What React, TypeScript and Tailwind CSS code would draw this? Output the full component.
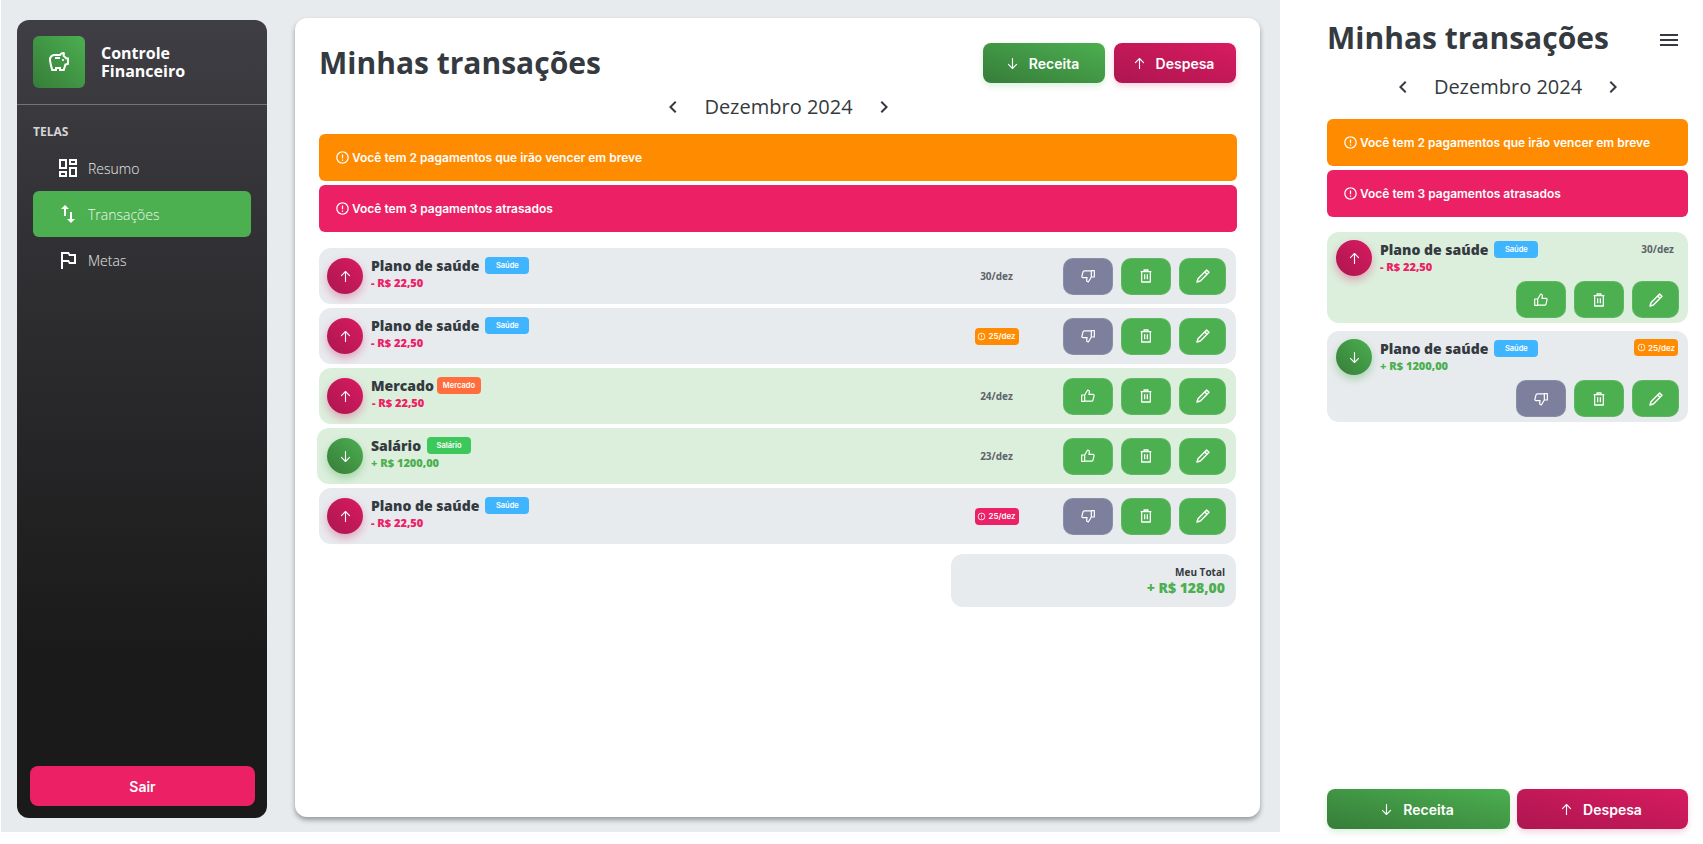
import React from "react";
import { MdOutlineDashboard, MdSwapVert, MdOutlinedFlag, MdOutlineSavings, MdOutlineErrorOutline, MdChevronLeft, MdChevronRight, MdMenu } from "react-icons/md";

const OPEN = "font-['Open_Sans',sans-serif]";
const INTER = "font-['Inter',sans-serif]";

function Arrow({ up, size = 18 }: { up: boolean; size?: number }) {
  return (
    <svg width={size} height={size} viewBox="0 0 24 24" fill="none" stroke="currentColor" strokeWidth="1.8" strokeLinecap="round" strokeLinejoin="round">
      {up ? <path d="M12 20V4M5.5 10.5 12 4l6.5 6.5" /> : <path d="M12 4v16M5.5 13.5 12 20l6.5-6.5" />}
    </svg>
  );
}

function Trash() {
  return (
    <svg width="16" height="16" viewBox="0 0 24 24" fill="none" stroke="currentColor" strokeWidth="1.9" strokeLinejoin="round">
      <path d="M4 5.5h16M9 5.5V3h6v2.5M5.5 5.5V21h13V5.5M10 9.5V17M14 9.5V17" />
    </svg>
  );
}

function Pencil() {
  return (
    <svg width="16" height="16" viewBox="0 0 24 24" fill="none" stroke="currentColor" strokeWidth="2.2" strokeLinejoin="round">
      <path d="M17.5 3 21 6.5 8 19.5 3 21l1.5-5zM14.5 6l3.5 3.5" />
    </svg>
  );
}

function Thumb({ up }: { up: boolean }) {
  return (
    <svg width="16" height="16" viewBox="0 0 24 24" fill="none" stroke="currentColor" strokeWidth="1.8" strokeLinejoin="round" style={up ? undefined : { transform: "rotate(180deg)" }}>
      <path d="M2.5 10.5h4.5V20H2.5zM7 10.5 11.5 3c1.7 0 2.8 1.2 2.5 3l-.6 3.5h6.1c1.2 0 1.9 1 1.6 2.1l-1.6 6.6c-.2.9-1 1.6-2 1.6H7" />
    </svg>
  );
}

const gradGreen = "bg-gradient-to-tr from-[#367d39] to-[#4caf50]";
const gradRed = "bg-gradient-to-tr from-[#ad1650] to-[#d81b60]";

function Badge({ label, color }: { label: string; color: string }) {
  return <span className={`${INTER} ${color} inline-flex h-[17px] w-[44px] items-center justify-center rounded-[4px] text-[7.5px] font-semibold text-white`}>{label}</span>;
}

function ActionBtn({ children, className }: { children: React.ReactNode; className: string }) {
  return <button className={`flex h-[37px] items-center justify-center rounded-[10px] border border-white/10 text-white ${className}`}>{children}</button>;
}

function Actions({ paid }: { paid: boolean }) {
  return (
    <div className="flex gap-2">
      <ActionBtn className={`w-[50px] ${paid ? "bg-[#4caf50]" : "bg-[#7d809c]"}`}>
        <Thumb up={paid} />
      </ActionBtn>
      <ActionBtn className="w-[50px] bg-[#4caf50]"><Trash /></ActionBtn>
      <ActionBtn className="w-[47px] bg-[#4caf50]"><Pencil /></ActionBtn>
    </div>
  );
}

function Circle({ up }: { up: boolean }) {
  return (
    <div className={`flex h-9 w-9 shrink-0 items-center justify-center rounded-full text-white ${up ? `${gradRed} shadow-[0_4px_8px_rgba(216,27,96,0.35)]` : `${gradGreen} shadow-[0_4px_8px_rgba(76,175,80,0.4)]`}`}>
      <Arrow up={up} size={15} />
    </div>
  );
}

function DateTag({ date, tone }: { date: string; tone?: string }) {
  if (!tone) return <span className={`${OPEN} text-[10px] font-bold leading-[19px] text-[#5d6369]`}>{date}</span>;
  return (
    <span className={`${INTER} ${tone} inline-flex h-[17px] w-[44px] items-center justify-center gap-[2px] rounded-[4px] text-[8px] font-semibold text-white`}>
      <MdOutlineErrorOutline size={9} />
      {date}
    </span>
  );
}

type Row = { title: string; tag: string; tagColor: string; up: boolean; amount: string; date: string; tone?: string; paid: boolean; wide?: boolean; tight?: boolean };

const rows: Row[] = [
  { title: "Plano de saúde", tag: "Saúde", tagColor: "bg-[#40b5ff]", up: true, amount: "- R$ 22,50", date: "30/dez", paid: false },
  { title: "Plano de saúde", tag: "Saúde", tagColor: "bg-[#40b5ff]", up: true, amount: "- R$ 22,50", date: "25/dez", tone: "bg-[#ff8c00]", paid: false },
  { title: "Mercado", tag: "Mercado", tagColor: "bg-[#ff6e3c]", up: true, amount: "- R$ 22,50", date: "24/dez", paid: true, tight: true },
  { title: "Salário", tag: "Salário", tagColor: "bg-[#3dc85c]", up: false, amount: "+ R$ 1200,00", date: "23/dez", paid: true, wide: true },
  { title: "Plano de saúde", tag: "Saúde", tagColor: "bg-[#40b5ff]", up: true, amount: "- R$ 22,50", date: "25/dez", tone: "bg-[#ec2064]", paid: false },
];

function TitleBlock({ r }: { r: Row }) {
  return (
    <div className="min-w-0">
      <div className={`flex items-center ${r.tight ? "gap-[3px]" : "gap-[6px]"}`}>
        <span className={`${OPEN} text-[14px] font-extrabold leading-[19px] text-[#343a40]`}>{r.title}</span>
        <Badge label={r.tag} color={r.tagColor} />
      </div>
      <div className={`${OPEN} text-[11px] font-extrabold leading-[15px] ${r.tight ? "pl-px" : ""} ${r.up ? "text-[#ec2064]" : "text-[#4caf50]"}`}>{r.amount}</div>
    </div>
  );
}

function DesktopRow({ r }: { r: Row }) {
  return (
    <div className={`flex h-14 items-center rounded-xl pr-[10px] ${r.paid ? "bg-[#dcefdd]" : "bg-[#e8ebee]"} ${r.wide ? "-ml-[2px] pl-[10px]" : "pl-2"}`}>
      <Circle up={r.up} />
      <div className="ml-2 flex-1 pb-[6px]"><TitleBlock r={r} /></div>
      <div className="flex w-[59px] justify-center"><DateTag date={r.date} tone={r.tone} /></div>
      <div className="ml-[37px]"><Actions paid={r.paid} /></div>
    </div>
  );
}

function MobileRow({ r }: { r: Row }) {
  return (
    <div className={`flex flex-col rounded-xl pb-[5px] pl-[9px] pr-[9px] pt-2 ${r.paid ? "bg-[#dcefdd]" : "bg-[#e8ebee]"}`}>
      <div className="flex items-start">
        <Circle up={r.up} />
        <div className="ml-2 flex-1"><TitleBlock r={r} /></div>
        <div className={`flex ${r.tone ? "mr-px" : "mr-[5px]"}`}><DateTag date={r.date} tone={r.tone} /></div>
      </div>
      <div className="mt-[5px] flex justify-end"><Actions paid={r.paid} /></div>
    </div>
  );
}

function MonthNav() {
  return (
    <div className="flex items-center justify-center gap-[19px] pl-px text-[#343a40]">
      <MdChevronLeft size={24} />
      <span className={`${OPEN} text-[20px] font-medium`}>Dezembro 2024</span>
      <MdChevronRight size={24} />
    </div>
  );
}

function Alert({ text, color }: { text: string; color: string }) {
  return (
    <div className={`${INTER} ${color} flex h-[47px] items-center gap-[2px] rounded-[6px] pl-4 text-[12px] font-semibold text-white`}>
      <MdOutlineErrorOutline size={15} />
      {text}
    </div>
  );
}

function CTA({ up, label, className }: { up: boolean; label: string; className: string }) {
  return (
    <button className={`${INTER} flex h-10 items-center justify-center gap-[9px] rounded-lg pr-[4px] text-[14px] font-semibold text-white ${up ? `${gradRed} shadow-[0_3px_6px_rgba(216,27,96,0.2)]` : `${gradGreen} shadow-[0_3px_6px_rgba(76,175,80,0.2)]`} ${className}`}>
      <Arrow up={up} size={15} />
      {label}
    </button>
  );
}

function NavItem({ icon, label, active }: { icon: React.ReactNode; label: string; active?: boolean }) {
  return (
    <div className={`flex h-[46px] items-center rounded-[6px] pl-[23px] ${active ? "bg-[#4caf50]" : ""}`}>
      <span className="flex w-[32px] text-white">{icon}</span>
      <span className={`${OPEN} text-[14px] font-light text-white/90`}>{label}</span>
    </div>
  );
}

export default function App() {
  return (
    <div className="flex h-[844px] w-full overflow-hidden bg-white">
      <div className="ml-px flex h-[832px] w-[1279px] items-start bg-[#e8ebee] pl-4">
        <aside className="mt-5 flex h-[798px] w-[250px] flex-col rounded-xl bg-gradient-to-b from-[#3e3e44] to-[#1a1a1a] to-80%">
          <div className="flex h-[85px] items-start gap-4 border-b border-white/30 pl-4 pt-4">
            <div className={`flex h-[52px] w-[52px] items-center justify-center rounded-[6px] ${gradGreen} text-white`}>
              <MdOutlineSavings size={24} />
            </div>
            <div className={`${OPEN} mt-[8px] text-[16px] font-bold leading-[18px] text-white`}>Controle<br />Financeiro</div>
          </div>
          <div className={`${OPEN} pl-4 pt-[19px] text-[12px] font-bold leading-[16px] text-[#d5d5d8]`}>TELAS</div>
          <nav className="mx-4 mt-[5px] flex flex-col">
            <NavItem icon={<MdOutlineDashboard size={24} />} label="Resumo" />
            <NavItem icon={<MdSwapVert size={24} />} label="Transações" active />
            <NavItem icon={<MdOutlinedFlag size={24} />} label="Metas" />
          </nav>
          <button className={`${INTER} mb-3 ml-[13px] mr-3 mt-auto h-10 rounded-lg bg-[#ec2064] text-[14px] font-semibold text-white`}>Sair</button>
        </aside>

        <main className="ml-[28px] mt-[18px] h-[799px] w-[965px] rounded-xl bg-white pl-6 pr-[23px] pt-[25px] shadow-[0_3px_5px_rgba(0,0,0,0.35)]">
          <div className="flex items-start justify-between pr-[1px]">
            <h1 className={`${OPEN} text-[30px] font-bold leading-[40px] text-[#343a40]`}>Minhas transações</h1>
            <div className="flex gap-[9px]">
              <CTA up={false} label="Receita" className="w-[122px]" />
              <CTA up label="Despesa" className="w-[122px]" />
            </div>
          </div>
          <div className="mt-[9px]"><MonthNav /></div>
          <div className="mt-[12px] flex flex-col gap-1">
            <Alert text="Você tem 2 pagamentos que irão vencer em breve" color="bg-[#ff8c00]" />
            <Alert text="Você tem 3 pagamentos atrasados" color="bg-[#ec2064]" />
          </div>
          <div className="mr-px mt-4 flex flex-col gap-1">
            {rows.map((r, i) => <DesktopRow key={i} r={r} />)}
          </div>
          <div className="ml-auto mr-px mt-[10px] flex h-[53px] w-[285px] flex-col items-end justify-center rounded-xl bg-[#e8ebee] pr-[11px]">
            <span className={`${OPEN} text-[10px] font-bold leading-[14px] text-[#343a40]`}>Meu Total</span>
            <span className={`${OPEN} text-[14px] font-extrabold leading-[18px] text-[#4caf50]`}>+ R$ 128,00</span>
          </div>
        </main>
      </div>

      <section className="flex h-[844px] flex-1 flex-col pb-[15px] pl-[47px] pr-[15px] pt-[18px]">
        <div className="flex items-center justify-between">
          <h1 className={`${OPEN} text-[30px] font-bold leading-[40px] text-[#343a40]`}>Minhas transações</h1>
          <MdMenu size={24} className="mr-[7px] mt-1 text-[#343a40]" />
        </div>
        <div className="mt-[14px]"><MonthNav /></div>
        <div className="mt-[17px] flex flex-col gap-1">
          <Alert text="Você tem 2 pagamentos que irão vencer em breve" color="bg-[#ff8c00]" />
          <Alert text="Você tem 3 pagamentos atrasados" color="bg-[#ec2064]" />
        </div>
        <div className="mt-[15px] flex flex-col gap-2">
          <MobileRow r={{ title: "Plano de saúde", tag: "Saúde", tagColor: "bg-[#40b5ff]", up: true, amount: "- R$ 22,50", date: "30/dez", paid: true }} />
          <MobileRow r={{ title: "Plano de saúde", tag: "Saúde", tagColor: "bg-[#40b5ff]", up: false, amount: "+ R$ 1200,00", date: "25/dez", tone: "bg-[#ff8c00]", paid: false }} />
        </div>
        <div className="mt-auto flex gap-[7px]">
          <CTA up={false} label="Receita" className="w-[183px]" />
          <CTA up label="Despesa" className="w-[171px]" />
        </div>
      </section>
    </div>
  );
}
